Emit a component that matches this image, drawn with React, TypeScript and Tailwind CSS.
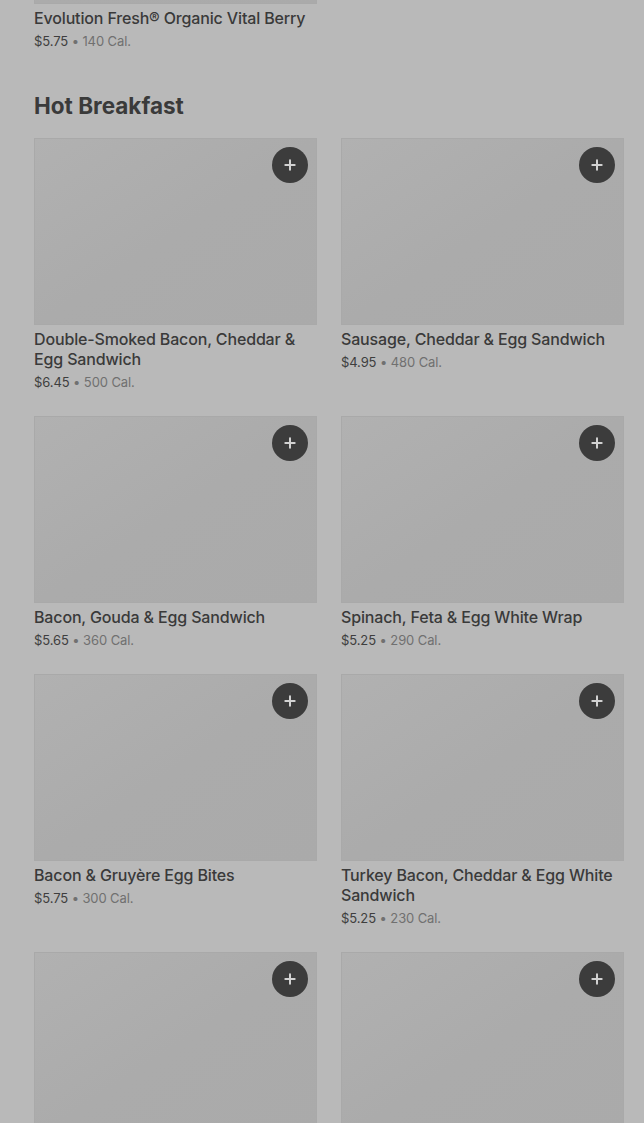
import { Plus } from "lucide-react";

type Item = { name: string; price: string; cal: string };

const breakfast: Item[] = [
  { name: "Double-Smoked Bacon, Cheddar & Egg Sandwich", price: "$6.45", cal: "500 Cal." },
  { name: "Sausage, Cheddar & Egg Sandwich", price: "$4.95", cal: "480 Cal." },
  { name: "Bacon, Gouda & Egg Sandwich", price: "$5.65", cal: "360 Cal." },
  { name: "Spinach, Feta & Egg White Wrap", price: "$5.25", cal: "290 Cal." },
  { name: "Bacon & Gruyère Egg Bites", price: "$5.75", cal: "300 Cal." },
  { name: "Turkey Bacon, Cheddar & Egg White Sandwich", price: "$5.25", cal: "230 Cal." },
];

function ProductImage({ addButton = true }: { addButton?: boolean }) {
  return (
    <div className="relative h-[187px] border border-[#a9a9a9] bg-gradient-to-br from-[#b1b1b1] via-[#ababab] to-[#aaaaaa]">
      {addButton && (
        <button className="absolute right-[8px] top-[8px] flex h-9 w-9 items-center justify-center rounded-full bg-[#3c3c3c] text-[#d2d2d2]">
          <Plus className="h-4 w-4" strokeWidth={3} />
        </button>
      )}
    </div>
  );
}

function ProductCard({ item, addButton = true }: { item: Item; addButton?: boolean }) {
  return (
    <div className="flex flex-col">
      <ProductImage addButton={addButton} />
      <div className="mt-1 text-[16px] font-medium leading-5 tracking-[-0.15px] text-[#3a3a3a]">{item.name}</div>
      <div className="mt-[3px] text-[13px] leading-5 tracking-[-0.1px] text-[#3e3e3e]">
        {item.price}
        <span className="text-[#707070]"> • {item.cal}</span>
      </div>
    </div>
  );
}

export default function App() {
  return (
    <main
      className="h-[1123px] overflow-hidden bg-[#b9b9b9] pl-[34px]"
      style={{ fontFamily: "Inter, 'Noto Sans', sans-serif" }}
    >
      <div className="-mt-[183px] w-[590px]">
        <div className="grid grid-cols-2 gap-x-6">
          <ProductCard
            item={{ name: "Evolution Fresh® Organic Vital Berry", price: "$5.75", cal: "140 Cal." }}
            addButton={false}
          />
        </div>

        <h2 className="mt-[41px] mb-[18px] text-[22.5px] font-bold leading-7 text-[#3a3a3a]">
          Hot Breakfast
        </h2>

        <div className="grid grid-cols-2 items-start gap-x-6 gap-y-6">
          {breakfast.map((item, i) => (
            <ProductCard key={i} item={item} />
          ))}
          {/* next row, only the photos are in view */}
          <ProductImage />
          <ProductImage />
        </div>
      </div>
    </main>
  );
}
